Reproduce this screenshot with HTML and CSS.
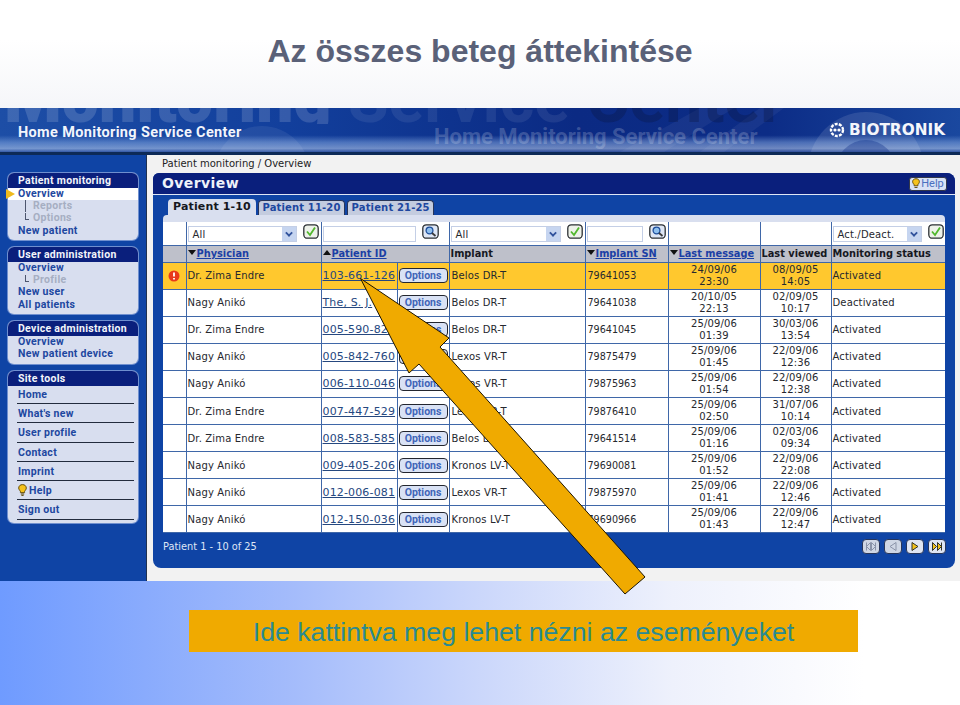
FILE: index.html
```html
<!DOCTYPE html>
<html lang="hu">
<head>
	<meta charset="UTF-8">
	<title>Az összes beteg áttekintése</title>
	<link rel="stylesheet" href="styles.css">
</head>
<body>
	<div id="slide">
		<h1 class="slide-title">Az összes beteg áttekintése</h1>

		<div class="app">
			<div class="banner">
				<svg class="swirl" width="960" height="44" viewBox="0 0 960 44">
					<circle cx="262" cy="66" r="48" fill="#fff" fill-opacity=".07"/>
					<path d="M620 44L700 0h34l-70 44zM700 44L760 0h24l-60 44z" fill="#fff" fill-opacity=".05"/>
					<circle cx="866" cy="62" r="58" fill="#fff" fill-opacity=".11"/>
					<circle cx="866" cy="62" r="30" fill="#0c2c86" fill-opacity=".35"/>
				</svg>
				<span class="ghost ghost-big"><b>Monitoring</b> Service <em>Center</em></span>
				<span class="ghost ghost-small">Home Monitoring Service Center</span>
				<span class="banner-name">Home Monitoring Service Center</span>
				<span class="logo">
					<svg width="16" height="16" viewBox="0 0 16 16"><circle cx="8" cy="8" r="6" fill="none" stroke="#fff" stroke-width="2.4" stroke-dasharray="3 1.2"/><circle cx="6" cy="8" r="1.6" fill="#fff"/><circle cx="10" cy="8" r="1.6" fill="#fff"/></svg>
					BIOTRONIK
				</span>
			</div>

			<div class="app-body">
				<div class="sidebar">
					<div class="card">
						<div class="card-head">Patient monitoring</div>
						<a class="item active">Overview</a>
						<a class="item sub tee">Reports</a>
						<a class="item sub">Options</a>
						<a class="item">New patient</a>
					</div>
					<div class="card">
						<div class="card-head">User administration</div>
						<a class="item">Overview</a>
						<a class="item sub">Profile</a>
						<a class="item">New user</a>
						<a class="item">All patients</a>
					</div>
					<div class="card">
						<div class="card-head">Device administration</div>
						<a class="item">Overview</a>
						<a class="item">New patient device</a>
					</div>
					<div class="card tools">
						<div class="card-head">Site tools</div>
						<a class="tool">Home</a>
						<a class="tool">What's new</a>
						<a class="tool">User profile</a>
						<a class="tool">Contact</a>
						<a class="tool">Imprint</a>
						<a class="tool"><svg class="bulb" width="9" height="12" viewBox="0 0 9 12"><path d="M4.5 .6C2.2 .6.7 2.1.7 4c0 1.500 1.100 2.300 1.700 3.400v1.200h4.200V7.400C7.200 6.300 8.300 5.500 8.300 4 8.300 2.100 6.800 .6 4.500 .6z" fill="#f5c21c" stroke="#5a4300" stroke-width=".9"/><path d="M2.800 10h3.400M3.400 11.400h2.200" stroke="#5a4300" stroke-width="1"/></svg>Help</a>
						<a class="tool">Sign out</a>
					</div>
				</div>

				<div class="main">
					<div class="crumb">Patient monitoring / Overview</div>
					<div class="panel">
						<div class="panel-head">
							<span>Overview</span>
							<a class="help"><svg width="8" height="11" viewBox="0 0 9 12"><path d="M4.500 .6C2.200 .6.700 2.100.700 4c0 1.500 1.100 2.300 1.700 3.400v1.200h4.200V7.400C7.200 6.300 8.300 5.500 8.300 4 8.300 2.100 6.800 .6 4.500 .6z" fill="#f5c21c" stroke="#5a4300"/><path d="M2.800 10.500h3.400" stroke="#5a4300"/></svg>Help</a>
						</div>
						<div class="tabs">
							<a class="tab current">Patient 1-10</a>
							<a class="tab">Patient 11-20</a>
							<a class="tab">Patient 21-25</a>
						</div>
						<div class="table-top"></div>
						<table class="patients">
							<colgroup>
								<col class="c-flag"><col class="c-phys"><col class="c-id"><col class="c-opt"><col class="c-impl"><col class="c-sn"><col class="c-last"><col class="c-view"><col class="c-stat">
							</colgroup>
							<tr class="filters">
								<td></td>
								<td><div class="filter"><span class="combo w-phys">All<i class="drop"></i></span><svg class="ok" width="16" height="15"><use href="#ok"/></svg></div></td>
								<td colspan="2"><div class="filter"><span class="field w-id"></span><svg class="ok" width="17" height="15"><use href="#lens"/></svg></div></td>
								<td><div class="filter"><span class="combo w-impl">All<i class="drop"></i></span><svg class="ok" width="16" height="15"><use href="#ok"/></svg></div></td>
								<td><div class="filter"><span class="field w-sn"></span><svg class="ok" width="17" height="15"><use href="#lens"/></svg></div></td>
								<td></td>
								<td></td>
								<td><div class="filter"><span class="combo w-stat">Act./Deact.<i class="drop"></i></span><svg class="ok" width="16" height="15"><use href="#ok"/></svg></div></td>
							</tr>
							<tr class="heads">
								<th></th>
								<th><i class="sort"></i><a>Physician</a></th>
								<th colspan="2"><i class="sort up"></i><a>Patient ID</a></th>
								<th>Implant</th>
								<th><i class="sort"></i><a>Implant SN</a></th>
								<th><i class="sort"></i><a>Last message</a></th>
								<th>Last viewed</th>
								<th>Monitoring status</th>
							</tr>
							<tr class="alert">
								<td class="flag"><svg width="12" height="12" viewBox="0 0 12 12"><circle cx="6" cy="6" r="5.500" fill="#e8391a"/><path d="M6 2.500v4M6 8v1.500" stroke="#fff" stroke-width="1.800"/></svg></td>
								<td>Dr. Zima Endre</td><td class="pid"><a>103-661-126</a></td><td class="opt"><a class="options">Options</a></td><td>Belos DR-T</td><td>79641053</td><td class="when">24/09/06<br>23:30</td><td class="when">08/09/05<br>14:05</td><td>Activated</td>
							</tr>
							<tr>
								<td></td><td>Nagy Anikó</td><td class="pid"><a>The, S. J.</a></td><td class="opt"><a class="options">Options</a></td><td>Belos DR-T</td><td>79641038</td><td class="when">20/10/05<br>22:13</td><td class="when">02/09/05<br>10:17</td><td>Deactivated</td>
							</tr>
							<tr>
								<td></td><td>Dr. Zima Endre</td><td class="pid"><a>005-590-820</a></td><td class="opt"><a class="options">Options</a></td><td>Belos DR-T</td><td>79641045</td><td class="when">25/09/06<br>01:39</td><td class="when">30/03/06<br>13:54</td><td>Activated</td>
							</tr>
							<tr>
								<td></td><td>Nagy Anikó</td><td class="pid"><a>005-842-760</a></td><td class="opt"><a class="options">Options</a></td><td>Lexos VR-T</td><td>79875479</td><td class="when">25/09/06<br>01:45</td><td class="when">22/09/06<br>12:36</td><td>Activated</td>
							</tr>
							<tr>
								<td></td><td>Nagy Anikó</td><td class="pid"><a>006-110-046</a></td><td class="opt"><a class="options">Options</a></td><td>Lexos VR-T</td><td>79875963</td><td class="when">25/09/06<br>01:54</td><td class="when">22/09/06<br>12:38</td><td>Activated</td>
							</tr>
							<tr>
								<td></td><td>Dr. Zima Endre</td><td class="pid"><a>007-447-529</a></td><td class="opt"><a class="options">Options</a></td><td>Lexos VR-T</td><td>79876410</td><td class="when">25/09/06<br>02:50</td><td class="when">31/07/06<br>10:14</td><td>Activated</td>
							</tr>
							<tr>
								<td></td><td>Dr. Zima Endre</td><td class="pid"><a>008-583-585</a></td><td class="opt"><a class="options">Options</a></td><td>Belos DR-T</td><td>79641514</td><td class="when">25/09/06<br>01:16</td><td class="when">02/03/06<br>09:34</td><td>Activated</td>
							</tr>
							<tr>
								<td></td><td>Nagy Anikó</td><td class="pid"><a>009-405-206</a></td><td class="opt"><a class="options">Options</a></td><td>Kronos LV-T</td><td>79690081</td><td class="when">25/09/06<br>01:52</td><td class="when">22/09/06<br>22:08</td><td>Activated</td>
							</tr>
							<tr>
								<td></td><td>Nagy Anikó</td><td class="pid"><a>012-006-081</a></td><td class="opt"><a class="options">Options</a></td><td>Lexos VR-T</td><td>79875970</td><td class="when">25/09/06<br>01:41</td><td class="when">22/09/06<br>12:46</td><td>Activated</td>
							</tr>
							<tr>
								<td></td><td>Nagy Anikó</td><td class="pid"><a>012-150-036</a></td><td class="opt"><a class="options">Options</a></td><td>Kronos LV-T</td><td>79690966</td><td class="when">25/09/06<br>01:43</td><td class="when">22/09/06<br>12:47</td><td>Activated</td>
							</tr>
						</table>
						<div class="panel-foot">
							<span>Patient 1 - 10 of 25</span>
							<div class="pager">
								<a class="off"><svg width="12" height="9" viewBox="0 0 12 9"><path d="M1.500 .5v8M10.500 .5v8M1.500 4.500l4-4v8zM10.500 4.500l-4-4v8z" fill="none" stroke="#8a93a8"/></svg></a>
								<a class="off"><svg width="8" height="9" viewBox="0 0 8 9"><path d="M7 .5v8l-6-4z" fill="none" stroke="#8a93a8"/></svg></a>
								<a><svg width="8" height="9" viewBox="0 0 8 9"><path d="M1 .5v8l6-4z" fill="#f3c21b" stroke="#30332a"/></svg></a>
								<a><svg width="12" height="9" viewBox="0 0 12 9"><path d="M1.500 .5v8l4-4zM6.500 .5v8l4-4zM10.500 .5v8" fill="#f3c21b" stroke="#30332a"/></svg></a>
							</div>
						</div>
					</div>
				</div>
			</div>
		</div>

		<div class="foot">
			<div class="callout">Ide kattintva meg lehet nézni az eseményeket</div>
		</div>

		<svg class="arrow" width="960" height="705" viewBox="0 0 960 705">
			<polygon points="360.500,278.500 449,338 440,347 645,577 625,594 419,364 409,373" fill="#f0aa00" stroke="#1c1400" stroke-width="1"/>
		</svg>
	</div>

	<svg width="0" height="0" class="defs">
		<symbol id="ok" viewBox="0 0 16 15">
			<rect x=".8" y=".8" width="14.400" height="13.400" rx="3.500" fill="#eef2ea" stroke="#2b2f33" stroke-width="1.300"/>
			<path d="M4 7.500l3 3.500 5-7.500" fill="none" stroke="#52b82e" stroke-width="1.800"/>
		</symbol>
		<symbol id="lens" viewBox="0 0 17 15">
			<rect x=".8" y=".8" width="15.400" height="13.400" rx="3.500" fill="#dfe7f5" stroke="#2b2f33" stroke-width="1.300"/>
			<circle cx="7.500" cy="6.500" r="3.400" fill="#8fc0ee" stroke="#1f4f9c" stroke-width="1.300"/>
			<path d="M10 9l3.500 3" stroke="#3a3a3a" stroke-width="1.800"/>
		</symbol>
	</svg>
</body>
</html>
```

FILE: styles.css
```css
html, body {
	margin: 0;
	padding: 0;
	background: #fff;
}
#slide {
	position: relative;
	width: 960px;
	height: 705px;
	overflow: hidden;
	font-family: "Liberation Sans", Arial, sans-serif;
	background: linear-gradient(#fff 0, #fff 40px, #f5f6f9 108px);
}
.defs {
	position: absolute;
}
.slide-title {
	margin: 0;
	height: 108px;
	padding-top: 33px;
	box-sizing: border-box;
	text-align: center;
	font-size: 32px;
	line-height: 37px;
	font-weight: bold;
	color: #5a6178;
}

/* application window */
.app {
	height: 473px;
	display: flex;
	flex-direction: column;
}
.banner {
	position: relative;
	flex: none;
	overflow: hidden;
	border-bottom: 3px solid #0d2a57;
	display: flex;
	align-items: center;
	justify-content: space-between;
	padding: 4px 15px 0 18px;
	height: 40px;
	background:
		linear-gradient(rgba(120,160,220,0) 0, rgba(120,160,220,0) 62%, rgba(135,170,225,.5) 78%, rgba(190,210,240,.55) 92%, rgba(70,100,170,.6) 100%),
		linear-gradient(90deg, #1d4ea6 0, #123f9c 30%, #0b2a83 60%, #0c2c86 80%, #1a489f 100%);
}
.swirl {
	position: absolute;
	left: 0;
	top: 0;
}
.ghost {
	position: absolute;
	font-family: Roboto, sans-serif;
	font-weight: bold;
	white-space: nowrap;
	color: rgba(255,255,255,.08);
}
.ghost b {
	color: rgba(255,255,255,.15);
}
.ghost em {
	font-style: normal;
	color: rgba(10,20,60,.3);
}
.ghost-big {
	left: 4px;
	top: -41px;
	height: 57px;
	overflow: hidden;
	font-size: 66px;
	line-height: 66px;
}
.ghost-small {
	left: 434px;
	top: 17px;
	font-size: 22px;
	line-height: 24px;
	color: rgba(255,255,255,.2);
}
.banner-name {
	position: relative;
	font-family: Roboto, sans-serif;
	font-weight: bold;
	font-size: 14.500px;
	letter-spacing: .35px;
	color: #f2f5fb;
}
.logo {
	position: relative;
	display: flex;
	align-items: center;
	gap: 4px;
	margin-top: -5px;
	font-family: "DejaVu Sans", sans-serif;
	font-weight: bold;
	font-size: 15.300px;
	color: #f4f6fb;
}
.app-body {
	flex: 1;
	display: flex;
	min-height: 0;
}

/* left menu */
.sidebar {
	flex: none;
	width: 130px;
	padding: 18px 8px 0;
	background: #0f44a5;
	border-right: 1px solid #20314f;
	display: flex;
	flex-direction: column;
	gap: 7px;
	font-family: Roboto, sans-serif;
	font-weight: bold;
	font-size: 10.500px;
	letter-spacing: .3px;
}
.card {
	position: relative;
	background: #d8deef;
	border-radius: 6px;
	box-shadow: 0 0 0 1px #6f8fcf;
	padding-bottom: 3px;
}
.card-head {
	height: 15px;
	line-height: 15px;
	padding-left: 10px;
	background: #0a1f7c;
	border-radius: 6px 6px 0 0;
	color: #f2f4fa;
}
.item {
	position: relative;
	display: block;
	height: 12.300px;
	line-height: 12.300px;
	padding-left: 10px;
	color: #1d47a0;
}
.item.active {
	background: #fff;
	height: 12px;
}
.item.active::before {
	content: "";
	position: absolute;
	left: -2px;
	top: 1px;
	border-left: 9px solid #efb91d;
	border-top: 5px solid transparent;
	border-bottom: 5px solid transparent;
}
.item.sub {
	padding-left: 25px;
	color: #a6aec2;
}
.item.sub::before {
	content: "";
	position: absolute;
	left: 17px;
	top: 1px;
	width: 3px;
	height: 6px;
	border-left: 1px solid #4d566e;
	border-bottom: 1px solid #4d566e;
}
.item.tee::before {
	height: 12px;
	top: 0;
	border-bottom: 0;
}
.tool {
	display: block;
	height: 17.300px;
	line-height: 17px;
	margin: 1px 4px 0 9px;
	padding-left: 1px;
	border-bottom: 1px solid #222b3d;
	color: #1d47a0;
}
.card-head + .tool {
	margin-top: 0;
}
.bulb {
	margin-right: 2px;
	vertical-align: -2px;
}

/* right side */
.main {
	flex: 1;
	min-width: 0;
	padding: 0 5px 0 6px;
	background: #f2f2f2;
}
.crumb {
	height: 18px;
	line-height: 18px;
	padding-left: 9px;
	font-family: "DejaVu Sans", sans-serif;
	font-size: 10px;
	color: #222;
}
.panel {
	height: 395px;
	background: #0f44a5;
	border-radius: 6px 8px 8px 8px;
	overflow: hidden;
}
.panel-head {
	display: flex;
	align-items: center;
	justify-content: space-between;
	height: 21px;
	padding: 0 8px 0 9px;
	background: #0a1f7c;
	border-bottom: 1px solid #dfe6f5;
	font-family: "DejaVu Sans", sans-serif;
	font-weight: bold;
	font-size: 14px;
	letter-spacing: .4px;
	color: #eef1f9;
}
.panel-head span {
	margin-top: -2px;
}
.help {
	display: flex;
	align-items: center;
	justify-content: center;
	gap: 1px;
	width: 36px;
	height: 12px;
	background: #d9e2f5;
	border: 1px solid #33384a;
	border-radius: 3px;
	font-family: Roboto, sans-serif;
	font-weight: normal;
	font-size: 11px;
	letter-spacing: 0;
	color: #4a6fc0;
}
.tabs {
	display: flex;
	align-items: flex-end;
	gap: 2px;
	height: 20px;
	padding-left: 15px;
	font-family: "DejaVu Sans", sans-serif;
	font-weight: bold;
	font-size: 10px;
	letter-spacing: .15px;
}
.tab {
	height: 14px;
	line-height: 14px;
	padding: 0 3.500px;
	background: #c4ccdf;
	border: 1px solid #27355a;
	border-bottom: 0;
	border-radius: 4px 4px 0 0;
	color: #1d47a0;
}
.tab.current {
	height: 16px;
	line-height: 15px;
	padding: 0 5px;
	background: #d9dfef;
	border: 0;
	font-size: 11px;
	color: #16181f;
}
.table-top {
	height: 7px;
	margin: 0 10px;
	background: #d9dfef;
	border-radius: 4px 4px 0 0;
}
.patients {
	width: 782px;
	margin-left: 10px;
	table-layout: fixed;
	border-collapse: collapse;
	background: #fff;
	font-family: "DejaVu Sans", sans-serif;
	font-size: 10px;
	letter-spacing: .15px;
	color: #26282e;
}
.c-flag { width: 23px; }
.c-phys { width: 135px; }
.c-id { width: 76px; }
.c-opt { width: 52px; }
.c-impl { width: 136px; }
.c-sn { width: 83px; }
.c-last { width: 92px; }
.c-view { width: 71px; }
.c-stat { width: 114px; }
.patients td, .patients th {
	height: 27.100px;
	padding: 0 0 0 1px;
	box-sizing: border-box;
	border: 1px solid #3f67a8;
	white-space: nowrap;
	overflow: hidden;
}
.patients td:nth-child(5), .patients td:nth-child(6) {
	padding-left: 2px;
}
.patients tr > :first-child {
	border-left: 0;
}
.patients tr > :last-child {
	border-right: 0;
}
.patients tr:first-child td {
	border-top: 0;
}
.patients tr.filters td {
	height: 23px;
	padding-left: 1px;
}
.patients tr.heads th {
	height: 17px;
	padding-left: 1px;
	background: #bec0ca;
	text-align: left;
	font-size: 9.800px;
	letter-spacing: 0;
	color: #16181f;
}
.patients td:nth-child(6) {
	font-size: 9.600px;
	letter-spacing: 0;
}
.heads a {
	color: #1b3fa5;
	text-decoration: underline;
}
.sort {
	display: inline-block;
	margin-right: 1px;
	vertical-align: 2px;
	border-top: 5px solid #111;
	border-left: 4px solid transparent;
	border-right: 4px solid transparent;
}
.sort.up {
	border-top: 0;
	border-bottom: 5px solid #111;
}
.filter {
	display: flex;
	align-items: flex-start;
	gap: 6px;
	height: 18px;
}
.combo, .field {
	display: block;
	position: relative;
	box-sizing: border-box;
	height: 16px;
	margin-top: 2px;
	line-height: 15px;
	padding-left: 4px;
	background: #fff;
	border: 1px solid #c4cfe6;
	font-size: 10px;
}
.w-phys { width: 109px; }
.w-id { width: 93px; }
.w-impl { width: 110px; }
.w-sn { width: 56px; }
.w-stat { width: 89px; }
.drop {
	position: absolute;
	right: 0;
	top: 0;
	width: 14px;
	height: 14px;
	background: #c6d5f0;
}
.drop::after {
	content: "";
	position: absolute;
	left: 4px;
	top: 3px;
	width: 4px;
	height: 4px;
	border-right: 2px solid #31529c;
	border-bottom: 2px solid #31529c;
	transform: rotate(45deg) scale(.9);
}
.ok {
	flex: none;
}
.flag {
	padding: 0 0 0 5px !important;
	line-height: 0;
}
.alert td {
	background: #ffc82e;
}
.pid {
	padding-left: 1px !important;
	font-size: 11px;
}
.pid a {
	color: #26487f;
	text-decoration: underline;
}
.opt {
	padding-left: 1px !important;
}
.options {
	display: block;
	width: 47px;
	height: 13px;
	line-height: 13px;
	text-align: center;
	background: #d9e2f5;
	border: 1px solid #23262f;
	border-radius: 4px;
	font-family: Roboto, sans-serif;
	font-weight: bold;
	font-size: 10.500px;
	letter-spacing: 0;
	color: #3f65b8;
}
.when {
	padding: 0 !important;
	text-align: center;
	line-height: 12px;
}
.panel-foot {
	display: flex;
	justify-content: space-between;
	align-items: center;
	height: 27px;
	padding: 0 9px 0 10px;
	font-family: "DejaVu Sans", sans-serif;
	font-size: 9.800px;
	color: #dfe6f5;
}
.pager {
	display: flex;
	gap: 4px;
}
.pager a {
	display: flex;
	align-items: center;
	justify-content: center;
	width: 16px;
	height: 13px;
	background: #dfe5f3;
	border: 1px solid #27355a;
	border-radius: 4px;
}
.pager a.off {
	background: #cfd6e4;
}

/* lower part of the slide */
.foot {
	height: 124px;
	padding: 29px 0 0 189px;
	box-sizing: border-box;
	background: linear-gradient(90deg, #6f9bff 0, #a3bbfb 30%, #cbd7fb 50%, #eef1fc 70%, #fff 90%);
}
.callout {
	width: 669px;
	height: 42px;
	line-height: 44px;
	text-align: center;
	background: #f0aa00;
	font-size: 26.700px;
	color: #2a8a92;
}
.arrow {
	position: absolute;
	left: 0;
	top: 0;
}
```
